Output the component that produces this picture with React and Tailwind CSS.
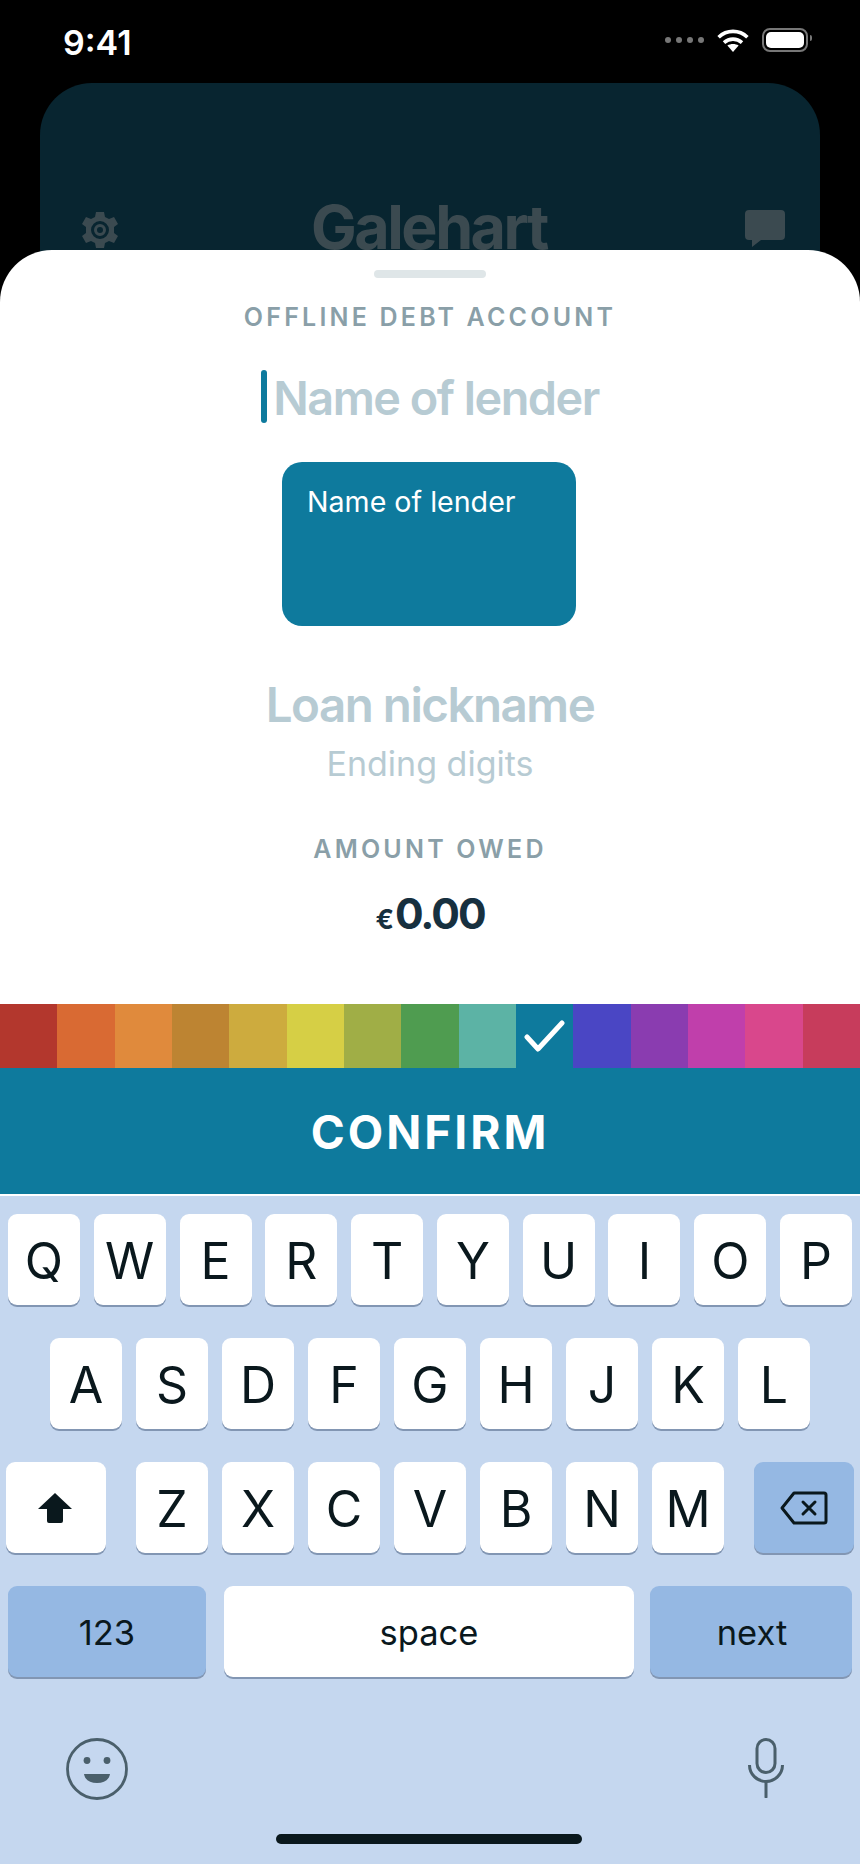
import React from 'react';

const swatches = [
    '#b3372d', '#d96a33', '#e08a3c', '#bd8432', '#cdab3e',
    '#d6cf45', '#a0ae46', '#4f9c50', '#5cb3a5', '#0e7a9d',
    '#4a46c4', '#8a3cb0', '#c03fab', '#d9478c', '#c73c5c',
];

const rowOne = ['Q', 'W', 'E', 'R', 'T', 'Y', 'U', 'I', 'O', 'P'];
const rowTwo = ['A', 'S', 'D', 'F', 'G', 'H', 'J', 'K', 'L'];
const rowThree = ['Z', 'X', 'C', 'V', 'B', 'N', 'M'];

const Key = ({ label }) => (
    <div className="w-[72px] h-[91px] pt-[2px] shrink-0 flex items-center justify-center rounded-[9px] bg-white shadow-[0_2px_0_#8296b3] text-[50px] leading-none text-[#0a181d]">
        {label}
    </div>
);

const Gear = () => (
    <svg width="36" height="38" viewBox="0 0 36 38" fill="#3b4a50" className="mt-[1px]">
        <path
            fillRule="evenodd"
            d="M14 1h8l1 5 4 2 5-2 4 7-4 3v6l4 3-4 7-5-2-4 2-1 5h-8l-1-5-4-2-5 2-4-7 4-3v-6l-4-3 4-7 5 2 4-2zM18 10a9 9 0 1 0 0 18 9 9 0 0 0 0-18z"
        />
        <path
            fillRule="evenodd"
            d="M18 13a6 6 0 1 0 0 12 6 6 0 0 0 0-12zM18 16a3 3 0 1 1 0 6 3 3 0 0 1 0-6z"
        />
    </svg>
);

const Wifi = () => (
    <svg width="32" height="23" viewBox="0 0 32 23" fill="none" stroke="white" strokeWidth="3.6">
        <path d="M1.6 8.2C9.8 .4 22.2 .4 30.4 8.2" />
        <path d="M7 13.6c5.2-4.6 12.8-4.6 18 0" />
        <path d="M16 23l-5.6-6.4c3.2-2 8-2 11.2 0z" fill="white" stroke="none" />
    </svg>
);

export default function App() {
    return (
        <div className="relative w-[860px] h-[1864px] overflow-hidden bg-black flex flex-col font-['Inter',sans-serif]">
            {/* status bar */}
            <div className="h-[83px] shrink-0 flex items-start justify-between pl-[63px] pr-[52px] pt-[22px]">
                <span className="text-[34px] leading-[42px] font-semibold text-white">9:41</span>
                <div className="flex items-center gap-[13px] pt-[6px]">
                    <div className="flex gap-[5px]">
                        <span className="w-[6px] h-[6px] rounded-full bg-[#777777]" />
                        <span className="w-[6px] h-[6px] rounded-full bg-[#777777]" />
                        <span className="w-[6px] h-[6px] rounded-full bg-[#777777]" />
                        <span className="w-[6px] h-[6px] rounded-full bg-[#777777]" />
                    </div>
                    <Wifi />
                    <div className="relative w-[46px] h-[24px] p-[2px] rounded-[8px] border-2 border-[#777777]">
                        <div className="w-full h-full rounded-[5px] bg-white" />
                        <span className="absolute -right-[6px] top-[5px] w-[2px] h-[6px] rounded-r-full bg-[#777777]" />
                    </div>
                </div>
            </div>

            {/* dimmed page behind the sheet */}
            <div className="mx-[40px] h-[217px] shrink-0 rounded-t-[52px] bg-[#082530] flex items-start justify-between pl-[42px] pr-[34px] pt-[127px]">
                <Gear />
                <span className="-mt-[13px] -translate-x-[2px] text-[61px] leading-[60px] font-bold tracking-[-2.5px] text-[#3b4a50]">Galehart</span>
                <svg width="42" height="38" viewBox="0 0 42 38" fill="#3b4a50">
                    <path d="M5 0h32a4 4 0 0 1 4 4v22a4 4 0 0 1-4 4H17L8 37v-7H5a4 4 0 0 1-4-4V4a4 4 0 0 1 4-4z" />
                </svg>
            </div>

            {/* sheet */}
            <div className="relative -mt-[50px] h-[754px] shrink-0 rounded-t-[52px] bg-white flex flex-col items-center pt-[20px]">
                <div className="w-[112px] h-[8px] rounded-full bg-[#dfe6e8]" />
                <div className="mt-[25px] text-[25px] leading-[28px] font-semibold tracking-[3.2px] text-[#8a9fa8]">OFFLINE DEBT ACCOUNT</div>
                <div className="mt-[39px] h-[53px] flex items-start gap-[6px]">
                    <div className="w-[6px] h-[53px] rounded-full bg-[#0e7a9d]" />
                    <span className="mt-[2px] text-[46.8px] leading-[53px] font-semibold tracking-[-1.5px] text-[#b7cbd3]">Name of lender</span>
                </div>
                <div className="mt-[39px] -ml-[2px] w-[294px] h-[164px] rounded-[20px] bg-[#0e7a9d] pl-[25px] pt-[22px] text-[28.6px] leading-[36px] text-white">
                    Name of lender
                </div>
                <div className="mt-[51px] text-[47.5px] leading-[56px] font-semibold tracking-[-1.5px] text-[#b7cbd3]">Loan nickname</div>
                <div className="mt-[11px] text-[34px] leading-[40px] text-[#b7cbd3]">Ending digits</div>
                <div className="mt-[51px] text-[25px] leading-[28px] font-semibold tracking-[3.2px] text-[#8a9fa8]">AMOUNT OWED</div>
                <div className="mt-[26px] flex items-baseline text-[#17303f] font-bold">
                    <span className="text-[27px] leading-[50px] mr-[1px]">€</span>
                    <span className="text-[42.5px] leading-[50px] tracking-[-2px]">0.00</span>
                </div>
            </div>

            {/* colour picker */}
            <div className="h-[64px] shrink-0 flex">
                {swatches.map((color, i) => (
                    <div key={color} className="flex-1 flex items-center justify-center" style={{ backgroundColor: color }}>
                        {i === 9 && (
                            <svg width="42" height="32" viewBox="0 0 42 32" fill="none" stroke="white" strokeWidth="5" strokeLinecap="round" strokeLinejoin="round">
                                <path d="M3 17l11 12L38 3" />
                            </svg>
                        )}
                    </div>
                ))}
            </div>

            <button className="h-[126px] shrink-0 pt-[3px] bg-[#0e7a9d] text-[46px] font-bold tracking-[3px] text-white">CONFIRM</button>
            <div className="h-[2px] shrink-0 bg-white" />

            {/* keyboard */}
            <div className="flex-1 bg-[#c5d7ef] pt-[18px] flex flex-col gap-[33px]">
                <div className="flex justify-center gap-[13.8px]">
                    {rowOne.map((k) => <Key key={k} label={k} />)}
                </div>
                <div className="flex justify-center gap-[14px]">
                    {rowTwo.map((k) => <Key key={k} label={k} />)}
                </div>
                <div className="flex items-center pl-[6px]">
                    <div className="w-[100px] h-[91px] flex items-center justify-center rounded-[9px] bg-white shadow-[0_2px_0_#8296b3]">
                        <svg width="36" height="32" viewBox="0 0 36 32" fill="#0a181d" className="-ml-[2px]">
                            <path d="M18 1L35 17H26V29a2 2 0 0 1-2 2H12a2 2 0 0 1-2-2V17H1z" />
                        </svg>
                    </div>
                    <div className="ml-[30px] flex gap-[14px]">
                        {rowThree.map((k) => <Key key={k} label={k} />)}
                    </div>
                    <div className="ml-[30px] w-[100px] h-[91px] flex items-center justify-center rounded-[9px] bg-[#95b8e3] shadow-[0_2px_0_#8296b3]">
                        <svg width="48" height="34" viewBox="0 0 48 34" fill="none" stroke="#0a181d" strokeWidth="3" strokeLinejoin="round" strokeLinecap="round">
                            <path d="M14 2h30a2 2 0 0 1 2 2v26a2 2 0 0 1-2 2H14L2 17z" />
                            <path d="M23 11l12 12M35 11L23 23" />
                        </svg>
                    </div>
                </div>
                <div className="flex pl-[8px] text-[34.5px] text-[#0a181d]">
                    <div className="w-[198px] h-[91px] pt-[3px] flex items-center justify-center rounded-[9px] bg-[#95b8e3] shadow-[0_2px_0_#8296b3]">123</div>
                    <div className="ml-[18px] w-[410px] h-[91px] pt-[3px] flex items-center justify-center rounded-[9px] bg-white shadow-[0_2px_0_#8296b3]">space</div>
                    <div className="ml-[16px] w-[202px] h-[91px] pt-[3px] pl-[2px] flex items-center justify-center rounded-[9px] bg-[#95b8e3] shadow-[0_2px_0_#8296b3]">next</div>
                </div>
                <div className="relative mt-[28px] flex items-start justify-between pl-[66px] pr-[76px]">
                    <svg width="62" height="62" viewBox="0 0 62 62">
                        <circle cx="31" cy="31" r="29.5" fill="none" stroke="#4a5f6b" strokeWidth="2.8" />
                        <circle cx="21" cy="22.5" r="3.4" fill="#4a5f6b" />
                        <circle cx="41" cy="22.5" r="3.4" fill="#4a5f6b" />
                        <path d="M18 36h26c-1 6-6 9-13 9s-12-3-13-9z" fill="#4a5f6b" />
                    </svg>
                    <svg width="36" height="60" viewBox="0 0 36 60" fill="none" stroke="#4a5f6b" strokeWidth="3">
                        <rect x="9" y="1.5" width="18" height="33" rx="9" />
                        <path d="M1.5 27a16.5 16.5 0 0 0 33 0" />
                        <path d="M18 44v15" strokeLinecap="round" />
                    </svg>
                </div>
            </div>

            {/* home indicator */}
            <div className="absolute left-[276px] top-[1834px] w-[306px] h-[10px] rounded-full bg-[#0a181d]" />
        </div>
    );
}
